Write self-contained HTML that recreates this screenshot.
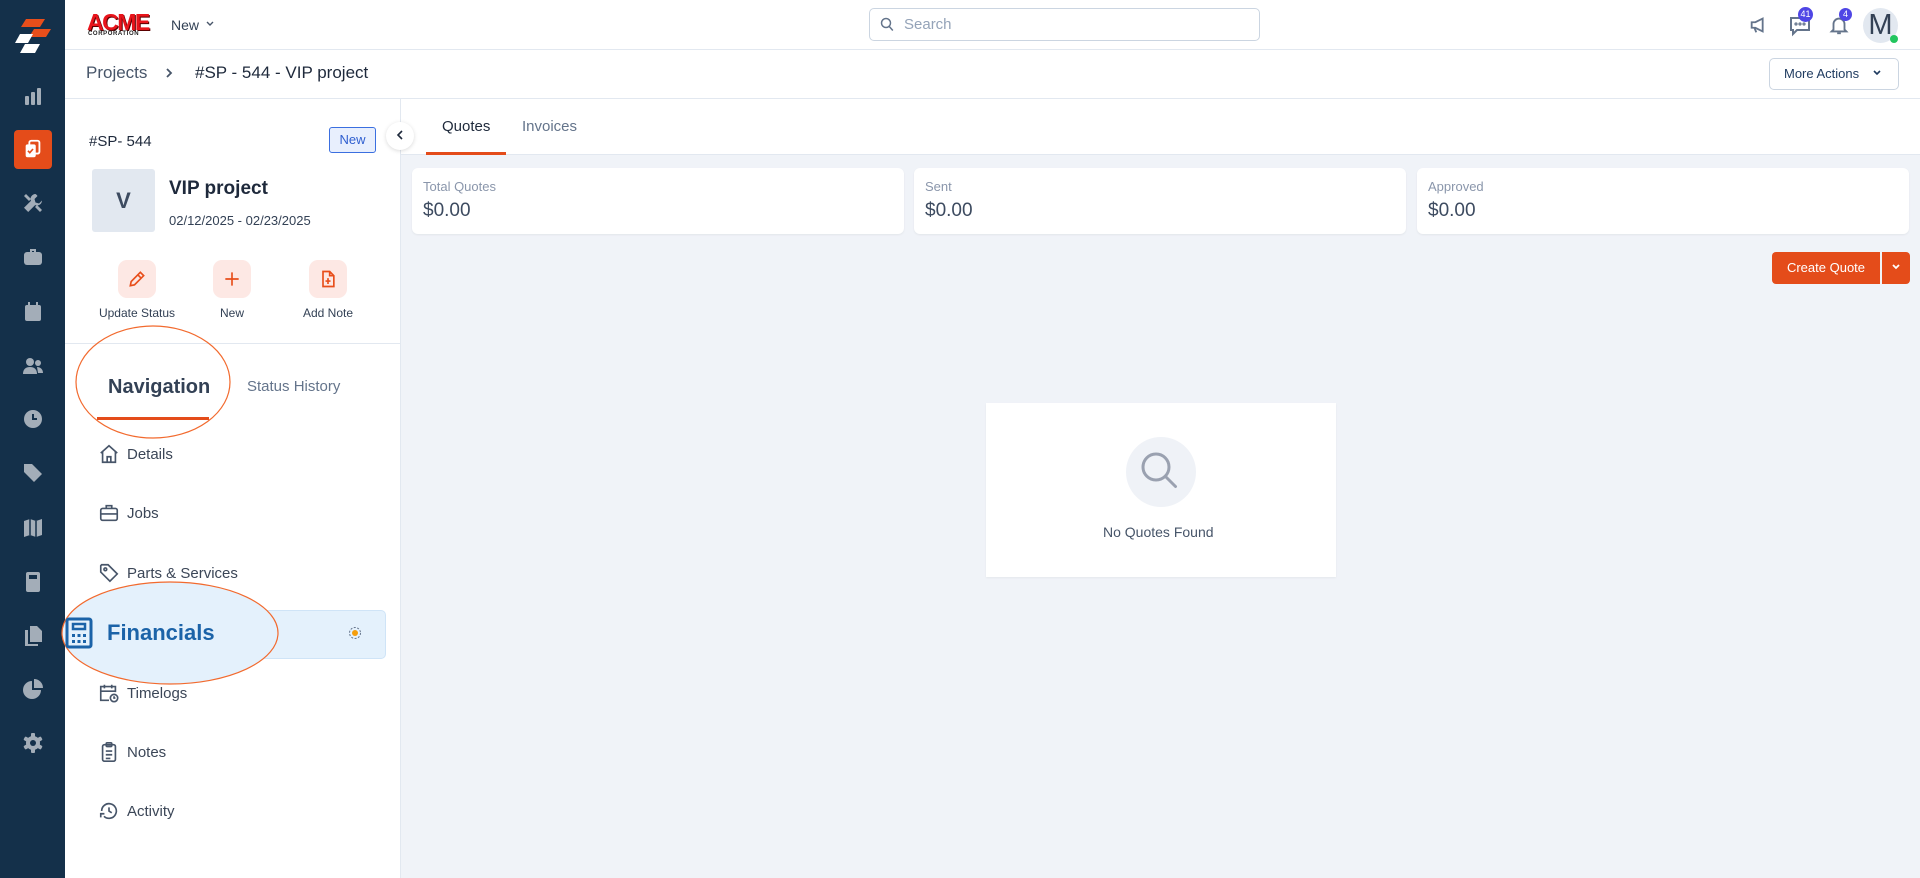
<!DOCTYPE html>
<html><head><meta charset="utf-8"><style>
*{box-sizing:border-box;margin:0;padding:0}
body{width:1920px;height:878px;overflow:hidden;background:#fff;font-family:"Liberation Sans",Arial,sans-serif;color:#1e293b;position:relative}
.abs{position:absolute}
.sb{left:0;top:0;width:65px;height:878px;background:#14304a}
.sbi{position:absolute;left:21px;width:24px;height:24px}
.t{position:absolute;white-space:nowrap}
.card{position:absolute;top:168px;height:66px;background:#fff;border-radius:6px;box-shadow:0 1px 2px rgba(0,0,0,.06)}
.card .l{position:absolute;left:11px;top:11px;font-size:13px;color:#8a96ab}
.card .v{position:absolute;left:11px;top:32px;font-size:19px;color:#3d4b60}
.ab{position:absolute;top:260px;width:38px;height:38px;border-radius:9px;background:#fde8e4}
.ab svg{position:absolute;left:9px;top:9px}
.al{position:absolute;top:306px;font-size:12px;color:#334155;transform:translateX(-50%)}
.ni{position:absolute;left:98px;width:22px;height:22px}
.nt{position:absolute;left:127px;font-size:15px;color:#3b4657}
</style></head><body>
<!-- sidebar -->
<div class="abs sb"></div>
<svg class="abs" style="left:14px;top:18px" width="38" height="38" viewBox="0 0 38 38">
<polygon points="12,1 31,1 26,9 7,9" fill="#e84e1b"/>
<polygon points="20,11 37,11 32,19 15,19" fill="#e84e1b"/>
<polygon points="6,16 19,16 14,25 1,25" fill="#fff"/>
<polygon points="11,26 26,26 21,35 6,35" fill="#fff"/>
</svg>
<svg class="sbi" style="top:84px" viewBox="0 0 24 24" fill="#a3adb8"><rect x="4" y="12" width="4" height="9" rx="1"/><rect x="10" y="8" width="4" height="13" rx="1"/><rect x="16" y="4" width="4" height="17" rx="1"/></svg>
<div class="abs" style="left:14px;top:130px;width:38px;height:39px;background:#e44c1a;border-radius:4px"></div>
<svg class="abs" style="left:22px;top:138px" width="22" height="22" viewBox="0 0 24 24" fill="#fff"><rect x="8" y="3" width="11" height="14" rx="2" fill="none" stroke="#fff" stroke-width="2"/><rect x="4" y="7" width="11" height="14" rx="2"/><path d="M6.5 14l2 2 3.5-4" stroke="#e44c1a" stroke-width="1.8" fill="none"/></svg>
<svg class="sbi" style="top:191px" viewBox="0 0 24 24" fill="#a3adb8"><path d="M14.5 3a5 5 0 0 0-4.6 6.9L3 16.8 7.2 21l6.9-6.9A5 5 0 0 0 21 9.5l-3 3-3.5-1-1-3.5 3-3A5 5 0 0 0 14.5 3z"/><path d="M3 5l2-2 5 5-2 2z"/><path d="M14 16l2-2 5 5-2 2z"/></svg>
<svg class="sbi" style="top:245px" viewBox="0 0 24 24" fill="#a3adb8"><path d="M9 4h6v3h-2V6h-2v1H9z"/><rect x="3" y="7" width="18" height="13" rx="3"/></svg>
<svg class="sbi" style="top:300px" viewBox="0 0 24 24" fill="#a3adb8"><rect x="7" y="2" width="2" height="4"/><rect x="15" y="2" width="2" height="4"/><rect x="4" y="5" width="16" height="16" rx="2"/></svg>
<svg class="sbi" style="top:354px" viewBox="0 0 24 24" fill="#a3adb8"><circle cx="9" cy="8" r="4"/><circle cx="17" cy="9" r="3"/><path d="M2 20c0-5 3-7 7-7s7 2 7 7z"/><path d="M16 13c3 0 6 2 6 6h-5z"/></svg>
<svg class="sbi" style="top:407px" viewBox="0 0 24 24"><circle cx="12" cy="12" r="9" fill="#a3adb8"/><path d="M12 7v5h4" stroke="#14304a" stroke-width="2" fill="none"/></svg>
<svg class="sbi" style="top:461px" viewBox="0 0 24 24" fill="#a3adb8"><path d="M3 3h8l10 10-8 8L3 11z"/></svg>
<svg class="sbi" style="top:516px" viewBox="0 0 24 24" fill="#a3adb8"><path d="M3 5l6-2 6 2 6-2v16l-6 2-6-2-6 2z"/><path d="M9 3v16M15 5v16" stroke="#14304a" stroke-width="1.5"/></svg>
<svg class="sbi" style="top:570px" viewBox="0 0 24 24" fill="#a3adb8"><rect x="5" y="2" width="14" height="20" rx="2"/><rect x="8" y="5" width="8" height="4" fill="#14304a"/></svg>
<svg class="sbi" style="top:624px" viewBox="0 0 24 24" fill="#a3adb8"><path d="M9 2h7l5 5v11H9z"/><path d="M4 6h3v14h10v2H4z"/></svg>
<svg class="sbi" style="top:677px" viewBox="0 0 24 24" fill="#a3adb8"><path d="M11 4a9 9 0 1 0 9 9h-9z"/><path d="M13 2a9 9 0 0 1 9 9h-9z"/></svg>
<svg class="sbi" style="top:731px" viewBox="0 0 24 24"><g fill="#a3adb8"><circle cx="12" cy="12" r="7"/><rect x="10" y="2" width="4" height="20" rx="1"/><rect x="10" y="2" width="4" height="20" rx="1" transform="rotate(60 12 12)"/><rect x="10" y="2" width="4" height="20" rx="1" transform="rotate(120 12 12)"/></g><circle cx="12" cy="12" r="3" fill="#14304a"/></svg>

<!-- top bar -->
<div class="abs" style="left:65px;top:49px;width:1855px;height:1px;background:#e2e8f0"></div>
<div class="t" style="left:87px;top:9px;font:900 23px 'Liberation Sans';color:#e8141b;letter-spacing:-1.5px;text-shadow:1px 1px 0 #5a0000">ACME</div>
<div class="t" style="left:88px;top:31px;font:900 6px 'Liberation Sans';letter-spacing:.6px;color:#222">CORPORATION</div>
<div class="t" style="left:171px;top:17px;font-size:14px;color:#334155">New</div>
<svg class="abs" style="left:205px;top:20px" width="10" height="8" viewBox="0 0 10 8"><path d="M2 2l3 3 3-3" stroke="#475569" stroke-width="1.4" fill="none"/></svg>
<div class="abs" style="left:869px;top:8px;width:391px;height:33px;border:1px solid #cbd5e1;border-radius:5px"></div>
<svg class="abs" style="left:880px;top:17px" width="14" height="15" viewBox="0 0 14 15"><circle cx="6" cy="6" r="4.5" stroke="#64748b" stroke-width="1.5" fill="none"/><path d="M9.3 9.5l3.5 4" stroke="#64748b" stroke-width="1.5"/></svg>
<div class="t" style="left:904px;top:16px;font-size:15px;color:#94a3b8">Search</div>
<svg class="abs" style="left:1748px;top:14px" width="22" height="22" viewBox="0 0 24 24" fill="none" stroke="#64748b" stroke-width="2"><path d="M4 9v6h4l8 4V5L8 9z"/><path d="M7 15l2 5"/></svg>
<svg class="abs" style="left:1788px;top:13px" width="24" height="24" viewBox="0 0 24 24" fill="none" stroke="#64748b" stroke-width="2"><path d="M3 5h18v12H9l-4 4v-4H3z"/><circle cx="8" cy="11" r=".6"/><circle cx="12" cy="11" r=".6"/><circle cx="16" cy="11" r=".6"/></svg>
<div class="abs" style="left:1798px;top:7px;width:15px;height:15px;border-radius:50%;background:#4f46e5;color:#fff;font-size:9px;text-align:center;line-height:15px">41</div>
<svg class="abs" style="left:1828px;top:13px" width="22" height="24" viewBox="0 0 24 24" fill="none" stroke="#64748b" stroke-width="2"><path d="M6 17V11a6 6 0 0 1 12 0v6l2 2H4z"/><path d="M10 21h4"/></svg>
<div class="abs" style="left:1839px;top:8px;width:13px;height:13px;border-radius:50%;background:#4f46e5;color:#fff;font-size:9px;text-align:center;line-height:13px">4</div>
<div class="abs" style="left:1863px;top:8px;width:35px;height:35px;border-radius:50%;background:#e2e8f0;color:#334155;font-size:29px;text-align:center;line-height:35px">M</div>
<div class="abs" style="left:1890px;top:35px;width:8px;height:8px;border-radius:50%;background:#22c55e"></div>

<!-- breadcrumb -->
<div class="abs" style="left:65px;top:98px;width:1855px;height:1px;background:#e2e8f0"></div>
<div class="t" style="left:86px;top:63px;font-size:17px;color:#475569">Projects</div>
<svg class="abs" style="left:164px;top:66px" width="10" height="14" viewBox="0 0 10 14"><path d="M3 3l4 4-4 4" stroke="#475569" stroke-width="1.8" fill="none"/></svg>
<div class="t" style="left:195px;top:63px;font-size:17px;color:#1e293b">#SP - 544 - VIP project</div>
<div class="abs" style="left:1769px;top:58px;width:130px;height:32px;border:1px solid #cbd5e1;border-radius:5px"></div>
<div class="t" style="left:1784px;top:66px;font-size:13px;color:#1e3a5f">More Actions</div>
<svg class="abs" style="left:1872px;top:69px" width="10" height="8" viewBox="0 0 10 8"><path d="M2 2l3 3 3-3" stroke="#1e3a5f" stroke-width="1.6" fill="none"/></svg>

<!-- left panel -->
<div class="abs" style="left:400px;top:99px;width:1px;height:779px;background:#e2e8f0"></div>
<div class="t" style="left:89px;top:133px;font-size:15px;color:#1e293b">#SP- 544</div>
<div class="abs" style="left:329px;top:127px;width:47px;height:26px;border:1px solid #3b6fe0;border-radius:3px;background:#e8effd;color:#2f5fd0;font-size:13px;text-align:center;line-height:24px">New</div>
<div class="abs" style="left:386px;top:122px;width:28px;height:28px;border-radius:50%;background:#fff;box-shadow:0 1px 4px rgba(0,0,0,.15)"></div>
<svg class="abs" style="left:395px;top:129px" width="10" height="12" viewBox="0 0 10 12"><path d="M7 2L3 6l4 4" stroke="#1e293b" stroke-width="1.6" fill="none"/></svg>
<div class="abs" style="left:92px;top:169px;width:63px;height:63px;border-radius:3px;background:#e2e8f0;color:#3d4b60;font:bold 22px 'Liberation Sans';text-align:center;line-height:63px">V</div>
<div class="t" style="left:169px;top:178px;font:bold 19px 'Liberation Sans';color:#1e293b">VIP project</div>
<div class="t" style="left:169px;top:213px;font-size:13px;color:#334155">02/12/2025 - 02/23/2025</div>
<div class="ab" style="left:118px"><svg width="20" height="20" viewBox="0 0 24 24" fill="none" stroke="#e84e1b" stroke-width="2"><path d="M4 20l1-5L16 4l4 4L9 19z"/><path d="M13 7l4 4"/></svg></div>
<div class="ab" style="left:213px"><svg width="20" height="20" viewBox="0 0 24 24" fill="none" stroke="#e84e1b" stroke-width="2"><path d="M12 4v16M4 12h16"/></svg></div>
<div class="ab" style="left:309px"><svg width="20" height="20" viewBox="0 0 24 24" fill="none" stroke="#e84e1b" stroke-width="2"><path d="M6 3h8l5 5v13H6z"/><path d="M14 3v5h5M12 11v7M9 14.5h6"/></svg></div>
<div class="al" style="left:137px">Update Status</div>
<div class="al" style="left:232px">New</div>
<div class="al" style="left:328px">Add Note</div>
<div class="abs" style="left:65px;top:343px;width:335px;height:1px;background:#e2e8f0"></div>
<div class="t" style="left:108px;top:376px;font:bold 20px 'Liberation Sans';color:#334155">Navigation</div>
<div class="t" style="left:247px;top:378px;font-size:15px;color:#64748b">Status History</div>
<div class="abs" style="left:97px;top:417px;width:112px;height:3px;background:#e44c1a"></div>
<svg class="abs" style="left:74px;top:324px" width="158" height="116"><ellipse cx="79" cy="58" rx="77" ry="56" fill="none" stroke="#f26a2e" stroke-width="1.2"/></svg>

<svg class="ni" style="top:443px" viewBox="0 0 24 24" fill="none" stroke="#475569" stroke-width="1.8"><path d="M3 11l9-8 9 8"/><path d="M5 9v12h14V9"/><path d="M10 21v-6h4v6"/></svg>
<div class="nt" style="top:446px">Details</div>
<svg class="ni" style="top:502px" viewBox="0 0 24 24" fill="none" stroke="#475569" stroke-width="1.8"><rect x="3" y="7" width="18" height="13" rx="2"/><path d="M9 7V4h6v3M3 13h18"/></svg>
<div class="nt" style="top:505px">Jobs</div>
<svg class="ni" style="top:562px" viewBox="0 0 24 24" fill="none" stroke="#475569" stroke-width="1.8"><path d="M3 4v7l10 10 8-8L11 3H4z"/><circle cx="8" cy="8" r="1.5"/></svg>
<div class="nt" style="top:565px">Parts &amp; Services</div>

<div class="abs" style="left:97px;top:610px;width:289px;height:49px;background:#e4f1fc;border:1px solid #cfe4f7;border-radius:5px"></div>
<svg class="abs" style="left:60px;top:580px" width="222" height="106"><ellipse cx="110" cy="53" rx="108" ry="51" fill="#e4f1fc" stroke="#f26a2e" stroke-width="1.2"/></svg>
<svg class="abs" style="left:65px;top:617px" width="28" height="32" viewBox="0 0 28 32" fill="none" stroke="#1b63a8" stroke-width="3"><rect x="2" y="2" width="24" height="28" rx="2"/><rect x="8" y="7" width="12" height="5" stroke-width="2.5"/><g fill="#1b63a8" stroke="none"><rect x="7" y="17" width="3" height="3"/><rect x="12.5" y="17" width="3" height="3"/><rect x="18" y="17" width="3" height="3"/><rect x="7" y="23" width="3" height="3"/><rect x="12.5" y="23" width="3" height="3"/><rect x="18" y="23" width="3" height="3"/></g></svg>
<div class="t" style="left:107px;top:620px;font:bold 22px 'Liberation Sans';color:#1b63a8">Financials</div>
<svg class="abs" style="left:348px;top:626px" width="14" height="14" viewBox="0 0 14 14"><circle cx="7" cy="7" r="5.5" fill="none" stroke="#64748b" stroke-width="1" stroke-dasharray="2 1.5"/><circle cx="7" cy="7" r="3" fill="#f59e0b"/></svg>

<svg class="ni" style="top:682px" viewBox="0 0 24 24" fill="none" stroke="#475569" stroke-width="1.8"><path d="M12 20H3V5h16v6M3 10h16M7 3v4M15 3v4"/><circle cx="17.5" cy="17.5" r="4"/><path d="M17.5 15.5v2h1.5"/></svg>
<div class="nt" style="top:685px">Timelogs</div>
<svg class="ni" style="top:741px" viewBox="0 0 24 24" fill="none" stroke="#475569" stroke-width="1.8"><rect x="5" y="4" width="14" height="18" rx="2"/><rect x="9" y="2" width="6" height="4" rx="1"/><path d="M8.5 11h7M8.5 15h7M8.5 19h5"/></svg>
<div class="nt" style="top:744px">Notes</div>
<svg class="ni" style="top:800px" viewBox="0 0 24 24" fill="none" stroke="#475569" stroke-width="1.8"><path d="M4 12a8 8 0 1 1 2.5 5.8"/><path d="M3 19v-4h4M12 8v4l3 2"/></svg>
<div class="nt" style="top:803px">Activity</div>

<!-- main -->
<div class="abs" style="left:401px;top:155px;width:1519px;height:723px;background:#f0f3f8"></div>
<div class="abs" style="left:401px;top:154px;width:1519px;height:1px;background:#e2e8f0"></div>
<div class="t" style="left:442px;top:118px;font-size:15px;color:#1e293b">Quotes</div>
<div class="t" style="left:522px;top:118px;font-size:15px;color:#64748b">Invoices</div>
<div class="abs" style="left:426px;top:152px;width:80px;height:3px;background:#e44c1a"></div>

<div class="card" style="left:412px;width:492px"><div class="l">Total Quotes</div><div class="v">$0.00</div></div>
<div class="card" style="left:914px;width:492px"><div class="l">Sent</div><div class="v">$0.00</div></div>
<div class="card" style="left:1417px;width:492px"><div class="l">Approved</div><div class="v">$0.00</div></div>

<div class="abs" style="left:1772px;top:252px;width:108px;height:32px;background:#e44c1a;border-radius:4px 0 0 4px;color:#fff;font-size:13px;text-align:center;line-height:32px">Create Quote</div>
<div class="abs" style="left:1882px;top:252px;width:28px;height:32px;background:#e44c1a;border-radius:0 4px 4px 0"></div>
<svg class="abs" style="left:1891px;top:263px" width="10" height="8" viewBox="0 0 10 8"><path d="M2 2l3 3 3-3" stroke="#fff" stroke-width="1.8" fill="none"/></svg>

<div class="abs" style="left:986px;top:403px;width:350px;height:174px;background:#fff;box-shadow:0 1px 2px rgba(0,0,0,.05)"></div>
<div class="abs" style="left:1126px;top:437px;width:70px;height:70px;border-radius:50%;background:#eff2f7"></div>
<svg class="abs" style="left:1138px;top:449px" width="46" height="46" viewBox="0 0 46 46" fill="none" stroke="#9aa1b0" stroke-width="3"><circle cx="18" cy="18" r="13"/><path d="M27.5 27.5l10 10" stroke-linecap="round"/></svg>
<div class="t" style="left:1103px;top:524px;font-size:14px;color:#475569">No Quotes Found</div>
</body></html>
